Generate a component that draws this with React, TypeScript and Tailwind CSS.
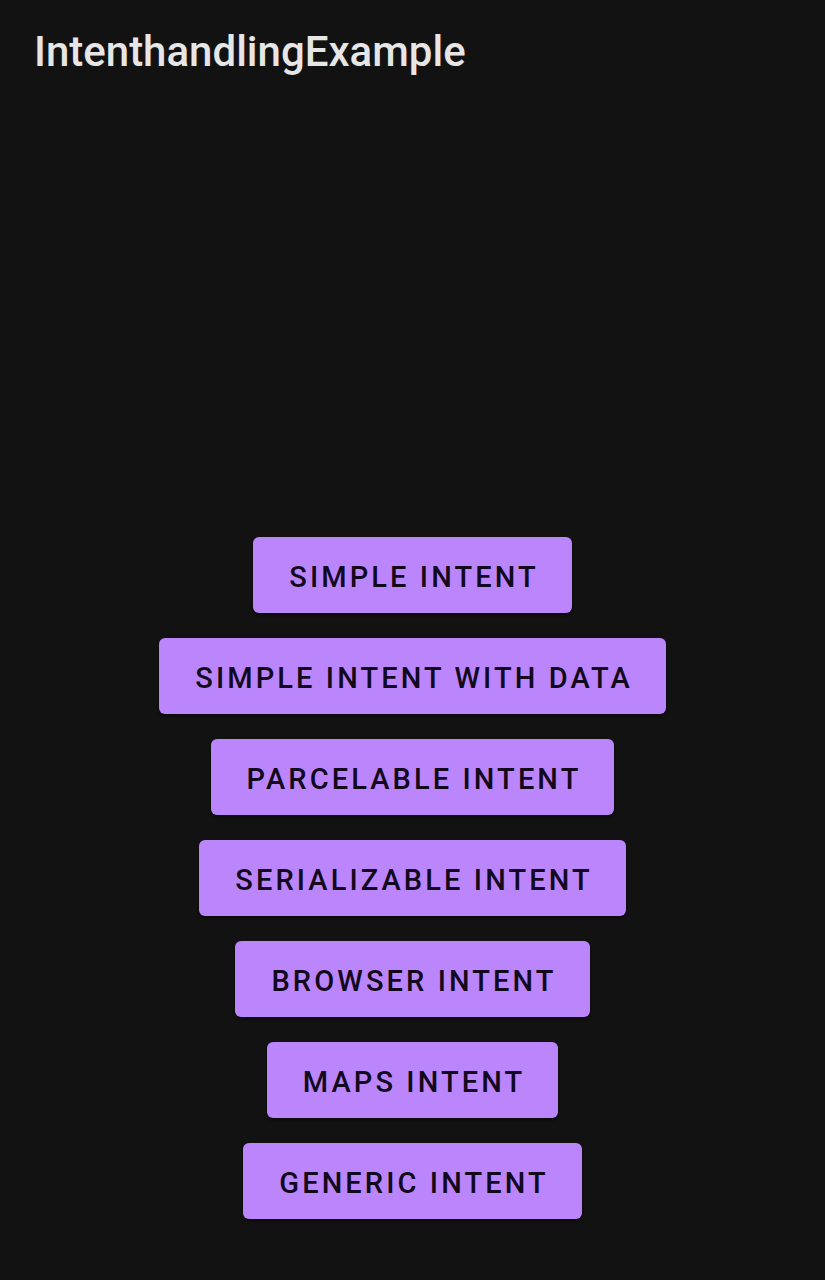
import React from "react";

const items = [
  "SIMPLE INTENT",
  "SIMPLE INTENT WITH DATA",
  "PARCELABLE INTENT",
  "SERIALIZABLE INTENT",
  "BROWSER INTENT",
  "MAPS INTENT",
  "GENERIC INTENT",
];

export default function App() {
  return (
    <div className="w-[825px] h-[1280px] bg-[#121212] flex flex-col" style={{ fontFamily: "Roboto, sans-serif" }}>
      <div className="h-[104px] pl-[34px] pt-[26px]">
        <h1 className="text-[42px] leading-[52px] text-[#e6e6e6] font-medium">IntenthandlingExample</h1>
      </div>
      <div className="flex flex-col items-center gap-[25px] pt-[433px]">
        {items.map((t) => (
          <button
            key={t}
            className="h-[76px] pl-[36px] pr-[33px] pt-[6px] rounded-[6px] bg-[#bb86fc] text-[#12091c] text-[29px] font-medium tracking-[3.1px] shadow-[0_2px_3px_rgba(0,0,0,0.5)]"
          >
            {t}
          </button>
        ))}
      </div>
    </div>
  );
}
